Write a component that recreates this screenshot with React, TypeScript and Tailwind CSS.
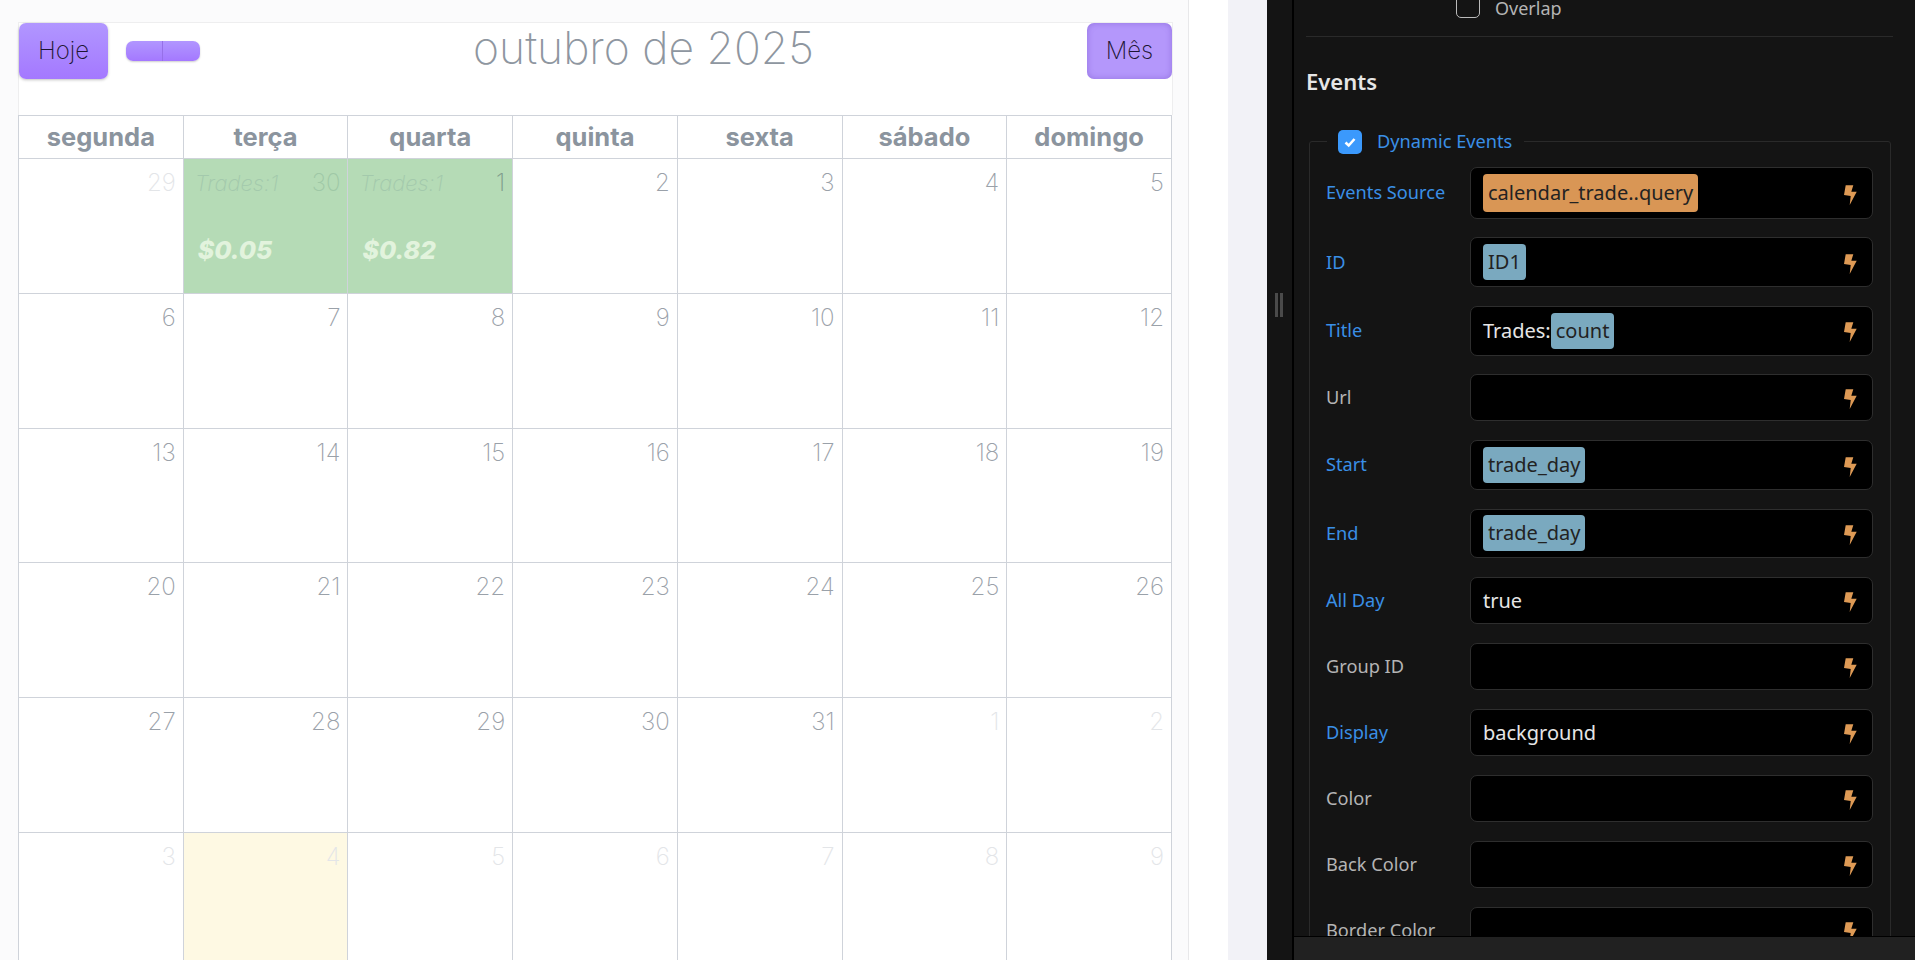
const HEADERS = ["segunda", "terça", "quarta", "quinta", "sexta", "sábado", "domingo"];

type Day = { n: number; dim?: boolean; trades?: string; amount?: string; today?: boolean; numClass?: string };

const DAYS: Day[] = [
  { n: 29, dim: true },
  { n: 30, trades: "Trades:1", amount: "$0.05", numClass: "text-[#9fc8a6]" },
  { n: 1, trades: "Trades:1", amount: "$0.82", numClass: "text-[#7f9c8c]" },
  ...[2, 3, 4, 5, 6, 7, 8, 9, 10, 11, 12, 13, 14, 15, 16, 17, 18, 19, 20, 21, 22, 23, 24, 25, 26, 27, 28, 29, 30, 31].map((n) => ({ n })),
  { n: 1, dim: true },
  { n: 2, dim: true },
  { n: 3, dim: true },
  { n: 4, dim: true, today: true },
  { n: 5, dim: true },
  { n: 6, dim: true },
  { n: 7, dim: true },
  { n: 8, dim: true },
  { n: 9, dim: true },
];

type Field = {
  label: string;
  active?: boolean;
  h: string;
  chip?: { text: string; color: string; h: string };
  prefix?: string;
  value?: string;
};

const ORANGE = "bg-[#d99655]";
const BLUE = "bg-[#7aa9bf]";

const FIELDS: Field[] = [
  { label: "Events Source", active: true, h: "h-[51.5px]", chip: { text: "calendar_trade..query", color: ORANGE, h: "h-[38px]" } },
  { label: "ID", active: true, h: "h-[49.5px]", chip: { text: "ID1", color: BLUE, h: "h-[36px]" } },
  { label: "Title", active: true, h: "h-[50px]", prefix: "Trades:", chip: { text: "count", color: BLUE, h: "h-[36px]" } },
  { label: "Url", h: "h-[47px]" },
  { label: "Start", active: true, h: "h-[50px]", chip: { text: "trade_day", color: BLUE, h: "h-[36px]" } },
  { label: "End", active: true, h: "h-[49.5px]", chip: { text: "trade_day", color: BLUE, h: "h-[36px]" } },
  { label: "All Day", active: true, h: "h-[47.3px]", value: "true" },
  { label: "Group ID", h: "h-[47.3px]" },
  { label: "Display", active: true, h: "h-[47.3px]", value: "background" },
  { label: "Color", h: "h-[47.3px]" },
  { label: "Back Color", h: "h-[47.3px]" },
  { label: "Border Color", h: "h-[47.3px]" },
];

const Bolt = () => (
  <svg width="13" height="20" viewBox="0 0 13 20" className="shrink-0 block">
    <path d="M1.7 0.3H9.3L7.3 6.7H12.7L5.7 20L6.7 11L0 10Z" fill="#de9a55" />
  </svg>
);

const DayCell = ({ day }: { day: Day }) => {
  let bg = "bg-white";
  if (day.trades) bg = "bg-[#b5dbb6]";
  if (day.today) bg = "bg-[#fef9e3]";
  const numColor = day.numClass ? day.numClass : day.dim ? "text-[#e3e5e8]" : "text-[#9aa1a9]";

  return (
    <div className={`h-[134.8px] border-r border-b border-[#cfd3da] pt-[5px] pl-[11px] pr-[7px] font-['Inter'] ${bg}`}>
      <div className="flex items-center justify-between h-[38px]">
        <span className="text-[22px] italic font-extralight text-[#a3c9ac]">{day.trades}</span>
        <span className={`ml-auto text-[24px] font-extralight ${numColor}`}>{day.n}</span>
      </div>
      {day.amount && (
        <div className="mt-[29px] ml-[3px] font-['Inter'] text-[25px] leading-[38px] italic font-extrabold text-[#e2f3dd]">
          {day.amount}
        </div>
      )}
    </div>
  );
};

const Calendar = () => (
  <div className="w-[1189px] h-full shrink-0 bg-[#fbfbfc] border-r border-[#e8e8ea] pl-[18px] pr-[15px] pt-[22px]">
    <div className="bg-white border-t border-x border-[#eeeeef] h-[93px]">
      <div className="flex items-start justify-between">
        <div className="flex items-center gap-[18px]">
          <button className="w-[89px] h-[56px] rounded-[7px] bg-gradient-to-b from-[#b196ff] to-[#a478ff] shadow-[0_1px_3px_rgba(0,0,0,0.25)] font-['Inter'] text-[24px] font-extralight text-[#1d1533]">
            Hoje
          </button>
          <div className="flex w-[74px] h-[20px] rounded-[7px] overflow-hidden bg-gradient-to-b from-[#b196ff] to-[#a478ff] shadow-[0_1px_2px_rgba(0,0,0,0.2)]">
            <div className="w-1/2 border-r border-[#9670e8]" />
          </div>
        </div>
        <h1 className="mt-[-3px] font-['Inter'] text-[44.4px] leading-[56px] font-extralight text-[#8e96a0]">outubro de 2025</h1>
        <button className="w-[85px] h-[56px] rounded-[7px] bg-[#b497fb] shadow-[inset_0_0_6px_rgba(90,50,180,0.35)] font-['Inter'] text-[24px] font-extralight text-[#1d1533]">
          Mês
        </button>
      </div>
    </div>
    <div className="w-[1154px] grid grid-cols-7 border-t border-l border-[#cfd3da] bg-white">
      {HEADERS.map((h) => (
        <div
          key={h}
          className="h-[43px] flex items-center justify-center border-r border-b border-[#cfd3da] font-['Inter'] text-[25.5px] font-bold text-[#8b949e]"
        >
          {h}
        </div>
      ))}
      {DAYS.map((d, i) => (
        <DayCell key={i} day={d} />
      ))}
    </div>
  </div>
);

const FieldRow = ({ field }: { field: Field }) => (
  <div className="flex items-center">
    <label className={`w-[144px] shrink-0 text-[18.2px] ${field.active ? "text-[#3a8fe6]" : "text-[#b4b4b4]"}`}>
      {field.label}
    </label>
    <div
      className={`w-[403px] ${field.h} flex items-center rounded-[7px] border border-[#2e2e2e] bg-black pl-[12px] pr-[15px] text-[20px] text-[#e6e6e6]`}
    >
      {field.prefix && <span>{field.prefix}</span>}
      {field.chip && (
        <span className={`${field.chip.color} ${field.chip.h} rounded-[4px] px-[5px] flex items-center text-[#222]`}>
          {field.chip.text}
        </span>
      )}
      {field.value && <span>{field.value}</span>}
      <span className="ml-auto mt-[3px]">
        <Bolt />
      </span>
    </div>
  </div>
);

const Panel = () => (
  <div className="relative flex-1 h-full overflow-hidden bg-[#141414] pl-[12px] pr-[22px] font-['Noto_Sans']">
    <div className="flex items-end pl-[150px] h-[37px] pb-[18px] border-b border-[#2a2a2a]">
      <span className="w-[24px] h-[24px] rounded-[5px] border border-[#bbbbbb]" />
      <span className="ml-[15px] text-[18px] leading-[20px] text-[#b4b4b4]">Overlap</span>
    </div>
    <h2 className="mt-[31px] text-[22px] font-semibold leading-[26px] text-[#e6e6e6]">Events</h2>
    <fieldset className="ml-[3px] mr-[3px] mt-[34px] border border-[#2a2a2a] rounded-[3px] pl-[16px] pr-[17px] pb-[40px] pt-[12px] relative">
      <legend className="ml-[1px] pl-[11px] pr-[12px] flex items-center">
        <span className="w-[24px] h-[24px] rounded-[5px] bg-[#3b99fc] flex items-center justify-center">
          <svg width="14" height="14" viewBox="0 0 14 14">
            <path d="M2.5 7.5L5.7 10.5L11.5 4" stroke="#fff" strokeWidth="2.6" fill="none" />
          </svg>
        </span>
        <span className="ml-[15px] text-[18.2px] text-[#3a8fe6]">Dynamic Events</span>
      </legend>
      <div className="flex flex-col gap-[18.7px]">
        {FIELDS.map((f) => (
          <FieldRow key={f.label} field={f} />
        ))}
      </div>
    </fieldset>
    <div className="absolute left-0 right-0 bottom-0 h-[24px] bg-[#212121] border-t border-black" />
  </div>
);

export default function App() {
  return (
    <div className="flex w-[1915px] h-[960px] overflow-hidden">
      <Calendar />
      <div className="w-[39px] h-full shrink-0 bg-white" />
      <div className="w-[39px] h-full shrink-0 bg-[#f2f2f7]" />
      <div className="relative w-[27px] h-full shrink-0 bg-[#141414] border-r-2 border-black">
        <div className="absolute left-[8px] top-[293px] w-[8px] h-[24px] flex justify-between">
          <span className="w-[3px] h-full bg-[#4a4a4a]" />
          <span className="w-[3px] h-full bg-[#4a4a4a]" />
        </div>
      </div>
      <Panel />
    </div>
  );
}
